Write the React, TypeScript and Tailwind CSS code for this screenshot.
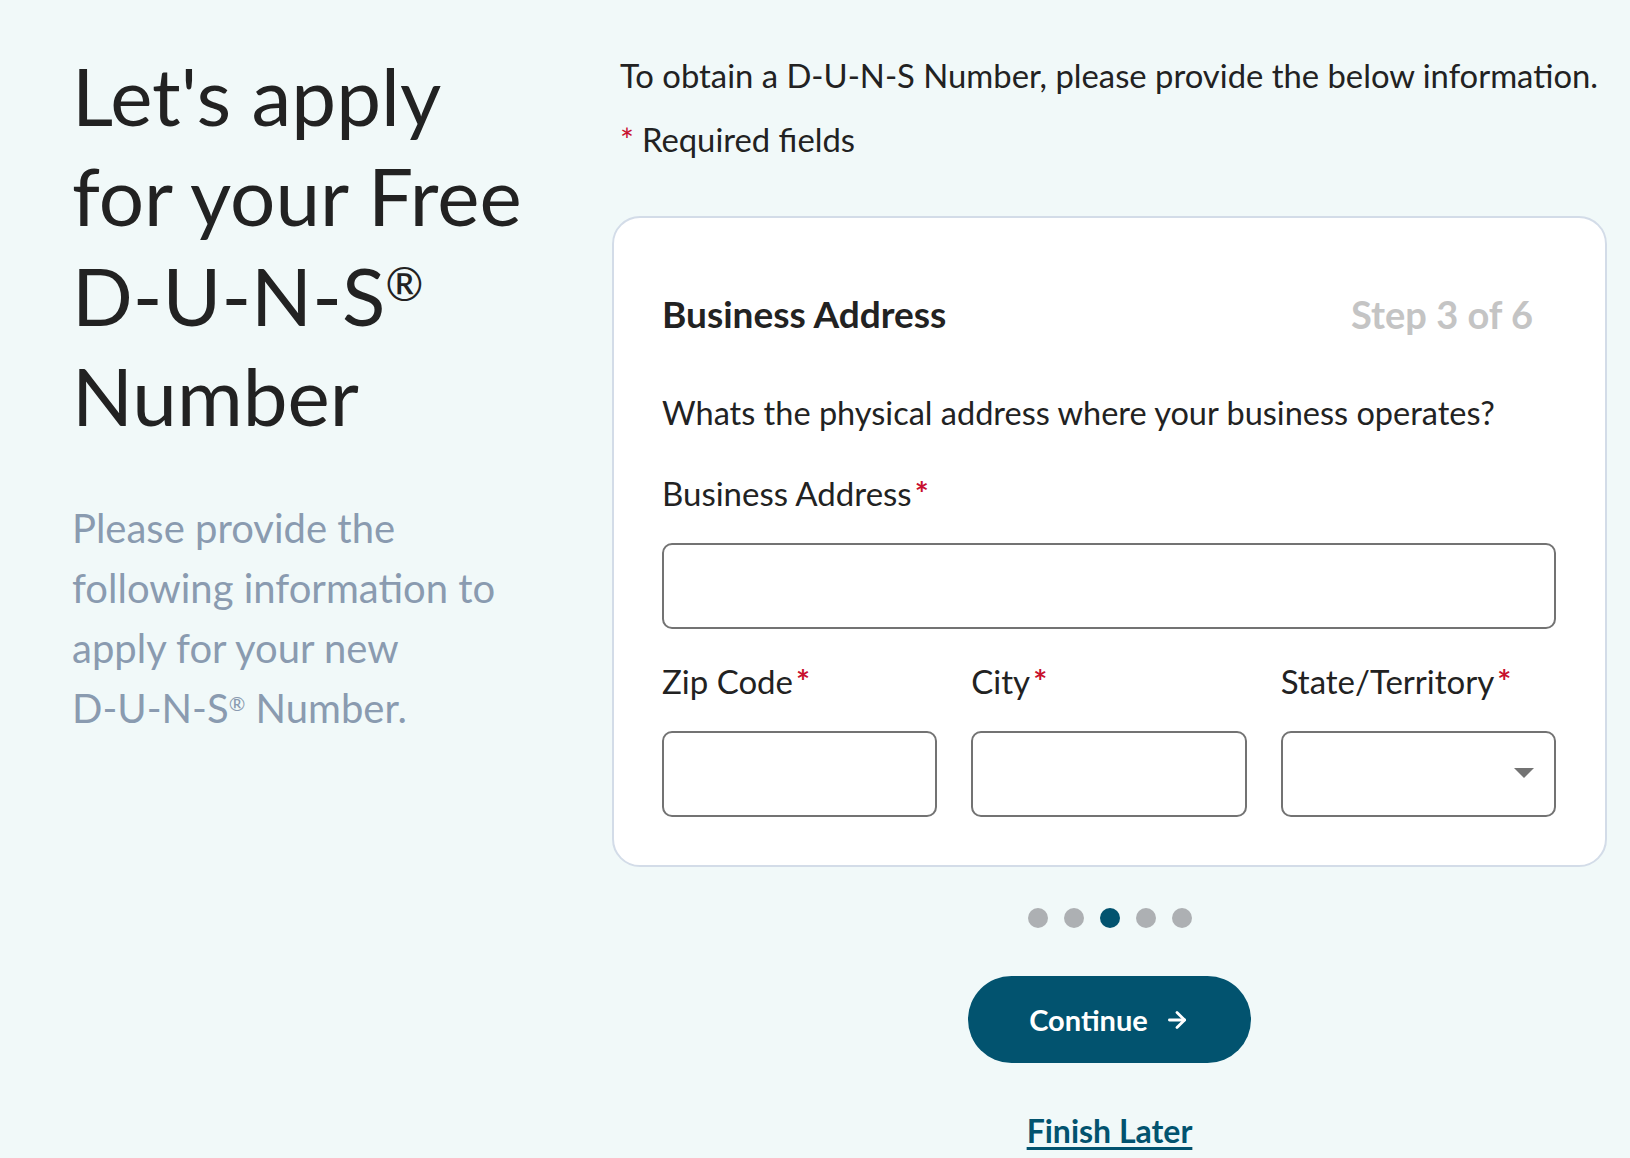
import { ArrowRight } from 'lucide-react';

const font = { fontFamily: 'Lato, "Noto Sans", sans-serif' };

function Label({ text }: { text: string }) {
  return (
    <label className="block text-[33px] leading-[40px] text-[#222222]">
      {text}
      <span className="ml-[3px] font-bold text-[#c8102e]">*</span>
    </label>
  );
}

const inputClass =
  'block h-[86px] w-full rounded-[10px] border-2 border-[#737373] bg-white px-4 text-[28px] text-[#222222] outline-none';

export default function App() {
  const steps = [0, 1, 2, 3, 4];

  return (
    <div className="min-h-[1158px] overflow-hidden bg-[#f1f9f9]" style={font}>
      <div className="flex pl-[72px]">
        {/* left intro */}
        <div className="w-[540px] shrink-0">
          <h1 className="mt-[45px] text-[80px] leading-[100px] font-normal text-[#222222]">
            Let's apply
            <br />
            for your Free
            <br />
            D-U-N-S<span className="align-[0.55em] text-[46px] leading-none">®</span>
            <br />
            Number
          </h1>
          <p className="mt-[53px] w-[470px] text-[40px] leading-[60px] text-[#8a9bb0]">
            Please provide the following information to apply for your new{' '}
            <span className="whitespace-nowrap">
              D-U-N-S<span className="align-[0.6em] text-[20px] leading-none">®</span> Number.
            </span>
          </p>
        </div>

        {/* form column */}
        <div className="w-[995px] shrink-0">
          <div className="pl-2 text-[32.8px] leading-[40px] text-[#222222]">
            <p className="mt-[56px]">To obtain a D-U-N-S Number, please provide the below information.</p>
            <p className="mt-[24px]">
              <span className="mr-[8px] text-[#c8102e]">*</span>Required fields
            </p>
          </div>

          <div className="mt-[56px] rounded-[28px] border-2 border-[#d3dce8] bg-white pt-[76px] pr-[49px] pb-[48px] pl-[48px]">
            <div className="flex items-center justify-between">
              <h2 className="text-[37px] leading-[40px] font-bold text-[#222222]">Business Address</h2>
              <span className="pr-[23px] text-[38px] leading-[40px] font-bold text-[#c4c4c4]">Step 3 of 6</span>
            </div>

            <p className="mt-[59px] text-[32.5px] leading-[40px] text-[#222222]">
              Whats the physical address where your business operates?
            </p>

            <div className="mt-[40px]">
              <Label text="Business Address" />
              <input className={`${inputClass} mt-[30px]`} />
            </div>

            <div className="mt-[32px] grid grid-cols-3 gap-x-[34px]">
              <div>
                <Label text="Zip Code" />
                <input className={`${inputClass} mt-[30px]`} />
              </div>
              <div>
                <Label text="City" />
                <input className={`${inputClass} mt-[30px]`} />
              </div>
              <div>
                <Label text="State/Territory" />
                <div className={`${inputClass} relative mt-[30px]`}>
                  <svg
                    className="absolute top-[35px] right-[20px]"
                    width="20"
                    height="10"
                    viewBox="0 0 20 10"
                  >
                    <path d="M0 0 L20 0 L10 10 Z" fill="#737373" />
                  </svg>
                </div>
              </div>
            </div>
          </div>

          <div className="mt-[41px] flex justify-center gap-[16px]">
            {steps.map((s) => (
              <span
                key={s}
                className={`h-[20px] w-[20px] rounded-full ${s === 2 ? 'bg-[#02536f]' : 'bg-[#adb0b3]'}`}
              />
            ))}
          </div>

          <div className="mt-[48px] flex justify-center">
            <button className="flex h-[87px] w-[283px] items-center justify-center gap-[16px] rounded-full bg-[#02536f] text-[29px] font-bold text-white">
              Continue
              <ArrowRight size={26} strokeWidth={2.6} />
            </button>
          </div>

          <div className="mt-[50px] flex justify-center">
            <a className="text-[32px] leading-[36px] font-bold text-[#02536f] underline decoration-[3px] underline-offset-[4px]">
              Finish Later
            </a>
          </div>
        </div>
      </div>
    </div>
  );
}
